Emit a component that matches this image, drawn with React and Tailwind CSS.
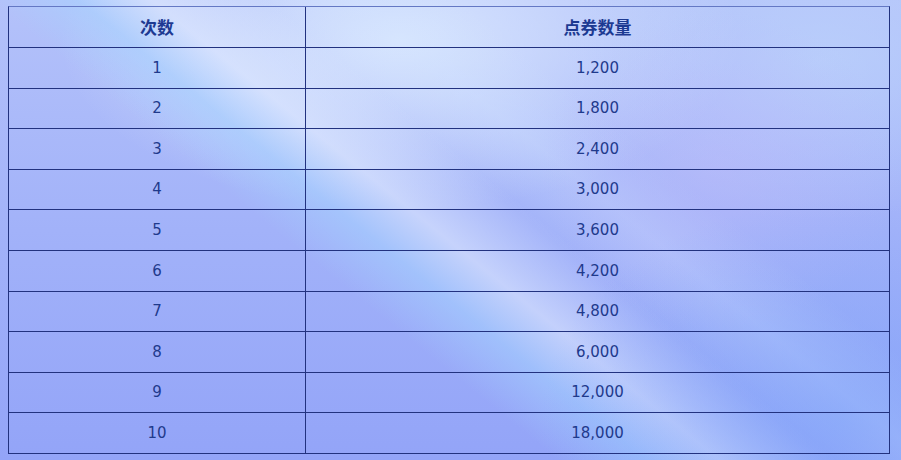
import React from 'react'

const rows = [
  ['1', '1,200'],
  ['2', '1,800'],
  ['3', '2,400'],
  ['4', '3,000'],
  ['5', '3,600'],
  ['6', '4,200'],
  ['7', '4,800'],
  ['8', '6,000'],
  ['9', '12,000'],
  ['10', '18,000'],
]

export default function App() {
  return (
    <div className="relative w-[901px] h-[460px] overflow-hidden bg-[linear-gradient(180deg,#b4c2fa_0%,#a2b2f9_50%,#93a4f8_100%)]">
      {/* light streaks behind the table */}
      <div className="absolute inset-0 bg-[radial-gradient(ellipse_340px_170px_at_400px_40px,rgba(222,236,255,0.85),rgba(222,236,255,0)_100%)]" />
      <div className="absolute inset-0 bg-[radial-gradient(ellipse_260px_160px_at_820px_60px,rgba(190,215,252,0.6),rgba(190,215,252,0)_100%)]" />
      <div className="absolute inset-0 bg-[linear-gradient(39deg,rgba(255,255,255,0)_38%,rgba(165,212,255,0.5)_44%,rgba(228,238,255,0.55)_49%,rgba(255,255,255,0)_57%)]" />
      <div className="absolute inset-0 bg-[linear-gradient(39deg,rgba(255,255,255,0)_56%,rgba(210,228,255,0.3)_63%,rgba(255,255,255,0)_70%)]" />
      <div className="absolute inset-0 bg-[radial-gradient(ellipse_180px_160px_at_720px_170px,rgba(190,185,250,0.45),rgba(190,185,250,0)_100%)]" />
      <div className="absolute inset-0 bg-[radial-gradient(ellipse_300px_220px_at_840px_420px,rgba(125,165,250,0.55),rgba(125,165,250,0)_100%)]" />

      <div className="relative ml-[8px] mt-[6px] w-[882px] h-[448px] box-border border border-[#22327f] border-t-[#6478c4] font-['DejaVu_Sans','Noto_Sans_CJK_SC',sans-serif] text-[#1f3a8c]">
        <div className="flex h-[40px]">
          <div className="w-[297px] box-border border-r border-[#22327f] flex items-center justify-center font-bold text-[17px] font-['Noto_Sans_CJK_SC',sans-serif] text-[#1d3a92]">
            次数
          </div>
          <div className="flex-1 flex items-center justify-center font-bold text-[17px] font-['Noto_Sans_CJK_SC',sans-serif] text-[#1d3a92]">
            点券数量
          </div>
        </div>
        {rows.map(([n, v]) => (
          <div key={n} className="flex h-[40.6px] box-border border-t border-[#22327f]">
            <div className="w-[297px] box-border border-r border-[#22327f] flex items-center justify-center text-[15px]">
              {n}
            </div>
            <div className="flex-1 flex items-center justify-center text-[15px]">
              {v}
            </div>
          </div>
        ))}
      </div>
    </div>
  )
}
